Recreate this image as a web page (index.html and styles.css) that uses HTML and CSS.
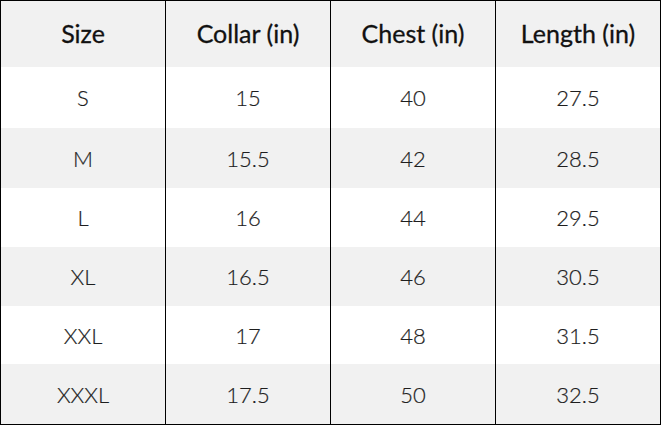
FILE: index.html
```html
<!DOCTYPE html>
<html>
<head>
<meta charset="utf-8">
<link rel="stylesheet" href="styles.css">
</head>
<body>
<div class="chart">
  <div class="cell head">Size</div><div class="cell head">Collar (in)</div><div class="cell head">Chest (in)</div><div class="cell head">Length (in)</div>
  <div class="cell">S</div><div class="cell">15</div><div class="cell">40</div><div class="cell">27.5</div>
  <div class="cell alt">M</div><div class="cell alt">15.5</div><div class="cell alt">42</div><div class="cell alt">28.5</div>
  <div class="cell">L</div><div class="cell">16</div><div class="cell">44</div><div class="cell">29.5</div>
  <div class="cell alt">XL</div><div class="cell alt">16.5</div><div class="cell alt">46</div><div class="cell alt">30.5</div>
  <div class="cell">XXL</div><div class="cell">17</div><div class="cell">48</div><div class="cell">31.5</div>
  <div class="cell alt">XXXL</div><div class="cell alt">17.5</div><div class="cell alt">50</div><div class="cell alt">32.5</div>
</div>
</body>
</html>
```
FILE: styles.css
```css
html, body {
  margin: 0;
  padding: 0;
  background: #fff;
}
.chart {
  box-sizing: border-box;
  width: 661px;
  height: 425px;
  border: 1px solid #000;
  display: grid;
  grid-template-columns: 164px 165px 165px 165px;
  grid-template-rows: 66px 61px 60px 59px 59px 58px 60px;
  font-family: Lato, "Open Sans", sans-serif;
  color: #1e1e1e;
}
.cell {
  display: flex;
  align-items: center;
  justify-content: center;
  font-size: 22px;
  font-weight: 300;
  -webkit-text-stroke: 0.2px #1e1e1e;
  background: #fff;
}
.cell:not(:nth-child(4n+1)) {
  border-left: 1px solid #000;
}
.head {
  background: #f1f1f1;
  font-size: 25px;
  font-weight: 400;
  -webkit-text-stroke: 0.3px #111;
  color: #111;
  padding-bottom: 3px;
}
.alt {
  background: #f1f1f1;
}
```
